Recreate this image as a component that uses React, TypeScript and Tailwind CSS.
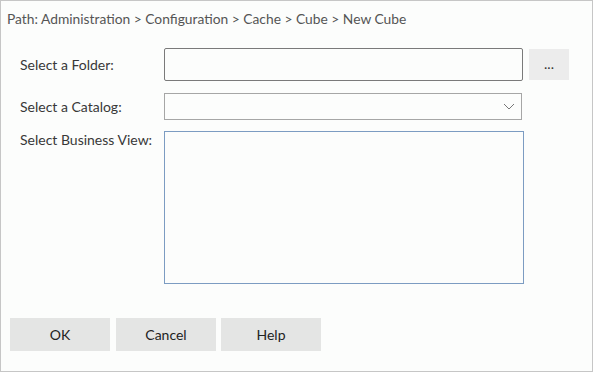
import React from 'react';

const App = () => {
  return (
    <div className="w-[594px] h-[373px] bg-white" style={{ fontFamily: 'Lato, "Open Sans", sans-serif' }}>
      <div className="w-[593px] h-[372px] border border-[#c6c6c6] bg-[#fcfdfc] text-[14px] leading-[16px] text-[#383838]">
        <div className="pt-[10px] pl-[6px] text-[13.8px] text-[#555]">Path: Administration &gt; Configuration &gt; Cache &gt; Cube &gt; New Cube</div>

        <div className="flex items-center mt-[21px] pl-[19px]">
          <div className="w-[144px]">Select a Folder:</div>
          <div className="w-[359px] h-[33px] border border-[#7a7a7a] rounded-[2px] bg-[#fcfdfc]" />
          <button className="ml-[6px] w-[40px] h-[31px] bg-[#ececec] text-[#333] leading-none pb-[2px]">...</button>
        </div>

        <div className="flex items-center mt-[12px] pl-[19px]">
          <div className="w-[144px]">Select a Catalog:</div>
          <div className="w-[358px] h-[27px] border border-[#a6a6a6] flex items-center justify-end pr-[6px]">
            <svg width="12" height="7" viewBox="0 0 12 7" fill="none">
              <path d="M1 1 L6 6 L11 1" stroke="#777" strokeWidth="1" />
            </svg>
          </div>
        </div>

        <div className="flex items-start mt-[11px] pl-[19px]">
          <div className="w-[144px] pt-[1px]">Select Business View:</div>
          <div className="w-[360px] h-[153px] border border-[#7c9cc2]" />
        </div>

        <div className="flex mt-[34px] pl-[9px]">
          <button className="w-[100px] h-[33px] bg-[#e4e5e4] text-[#222]">OK</button>
          <button className="ml-[6px] w-[100px] h-[33px] bg-[#e4e5e4] text-[#222]">Cancel</button>
          <button className="ml-[5px] w-[100px] h-[33px] bg-[#e4e5e4] text-[#222]">Help</button>
        </div>
      </div>
    </div>
  );
};

export default App;
